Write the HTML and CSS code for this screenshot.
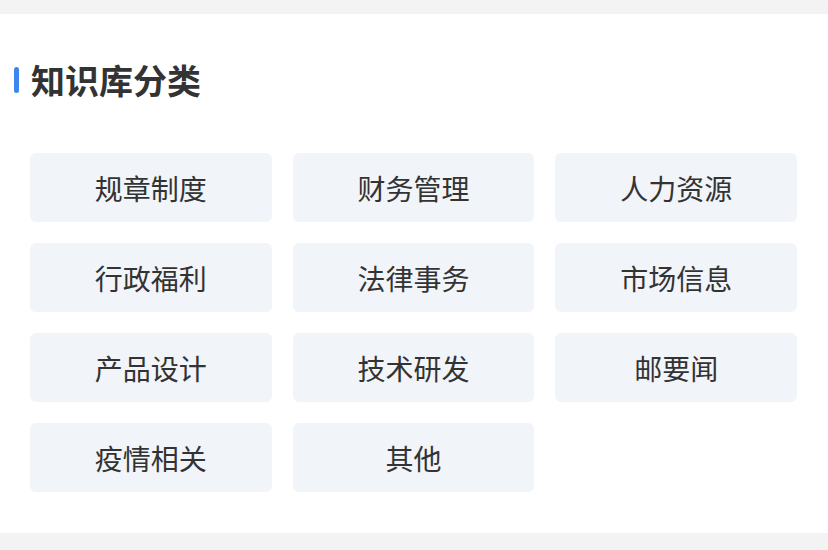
FILE: index.html
```html
<!DOCTYPE html>
<html lang="zh">
<head>
<meta charset="utf-8">
<link rel="stylesheet" href="styles.css">
</head>
<body>
<div class="page">
  <section class="card">
    <div class="header">
      <span class="bar"></span>
      <h2 class="title">知识库分类</h2>
    </div>
    <div class="grid">
      <div class="item">规章制度</div>
      <div class="item">财务管理</div>
      <div class="item">人力资源</div>
      <div class="item">行政福利</div>
      <div class="item">法律事务</div>
      <div class="item">市场信息</div>
      <div class="item">产品设计</div>
      <div class="item">技术研发</div>
      <div class="item">邮要闻</div>
      <div class="item">疫情相关</div>
      <div class="item">其他</div>
    </div>
  </section>
</div>
</body>
</html>
```

FILE: styles.css
```css
html, body {
  margin: 0;
  padding: 0;
  background: #f3f3f3;
  font-family: "Noto Sans CJK SC", "Noto Sans", sans-serif;
  color: #333;
}
.page {
  padding-top: 14px;
}
.card {
  background: #fff;
  height: 519px;
  box-sizing: border-box;
  padding: 42px 31px 41px 30px;
}
.header {
  display: flex;
  align-items: center;
  height: 48px;
  margin-left: -16px;
}
.bar {
  width: 5px;
  height: 26px;
  border-radius: 3px;
  background: #3d86f0;
  margin-right: 12px;
}
.title {
  margin: 0;
  font-size: 34px;
  font-weight: 700;
  color: #333;
  line-height: 48px;
}
.grid {
  margin-top: 49px;
  display: grid;
  grid-template-columns: repeat(3, 1fr);
  column-gap: 21px;
  row-gap: 21px;
}
.item {
  height: 69px;
  border-radius: 6px;
  background: #f1f4f8;
  display: flex;
  align-items: center;
  justify-content: center;
  font-size: 28px;
  color: #333;
}
```
